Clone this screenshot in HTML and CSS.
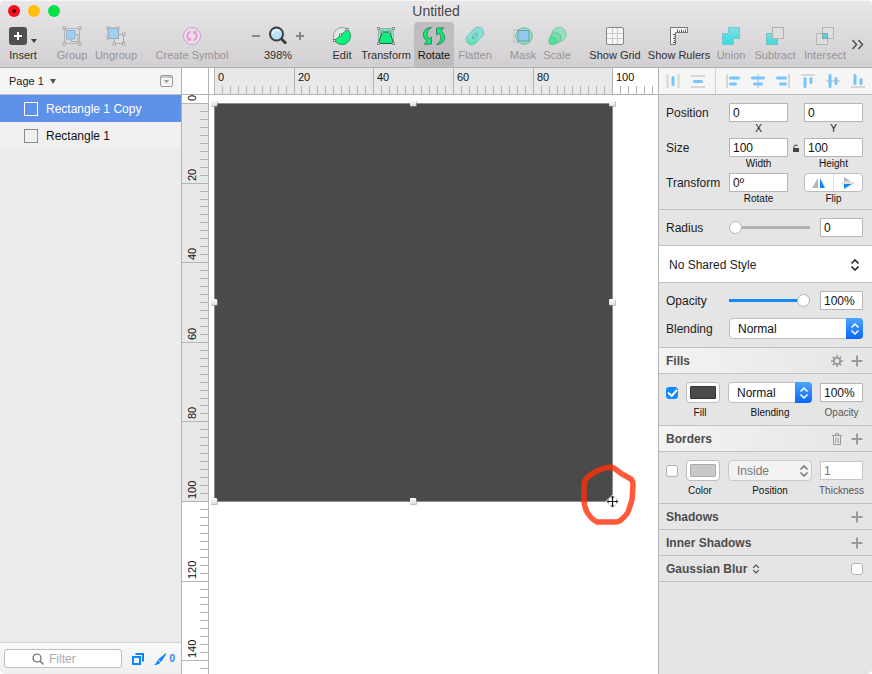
FILE: index.html
```html
<!DOCTYPE html>
<html lang="en">
<head>
<meta charset="utf-8">
<title>Untitled</title>
<link rel="stylesheet" href="styles.css">
</head>
<body>
<svg class="defs" aria-hidden="true">
  <defs>
    <linearGradient id="cyan" x1="0" y1="0" x2="0" y2="1"><stop offset="0" stop-color="#82dfe2"/><stop offset="1" stop-color="#36dcdf"/></linearGradient>
    <linearGradient id="mint" x1="0" y1="0" x2="0" y2="1"><stop offset="0" stop-color="#8fd8dc"/><stop offset=".6" stop-color="#86dfd0"/><stop offset="1" stop-color="#45e59c"/></linearGradient>
    <linearGradient id="teal" x1="0" y1="0" x2="0" y2="1"><stop offset="0" stop-color="#6ce0b8"/><stop offset="1" stop-color="#d5ebe5"/></linearGradient>
    <linearGradient id="grip" x1="0" y1="0" x2="0" y2="1"><stop offset="0" stop-color="#fff"/><stop offset="1" stop-color="#dcdcdc"/></linearGradient>
    <symbol id="plus" viewBox="0 0 12 12"><path d="M6 0.5V11.5M0.500 6H11.500" stroke="#9a9a9a" stroke-width="2"/></symbol>
    <symbol id="updown" viewBox="0 0 10 12"><path d="M1.500 4.500L5 1L8.500 4.500M1.500 7.500L5 11L8.500 7.500" fill="none" stroke="currentColor" stroke-width="1.500"/></symbol>
  </defs>
</svg>
<div class="window">
  <header class="chrome">
    <div class="titlebar">
      <div class="lights">
        <button class="light red" aria-label="Close"></button>
        <button class="light yellow" aria-label="Minimize"></button>
        <button class="light green" aria-label="Zoom"></button>
      </div>
      <h1>Untitled</h1>
      <span></span>
    </div>
    <nav class="toolbar">
      <div class="group">
        <button class="tool w46"><span class="insert"><svg width="18" height="18" viewBox="0 0 18 18"><rect width="18" height="18" rx="3" fill="#505050"/><path d="M9 5V13M5 9H13" stroke="#fff" stroke-width="2"/></svg><svg width="6" height="12" viewBox="0 0 6 12"><path d="M0 5H6L3 9Z" fill="#404040"/></svg></span>Insert</button>
      </div>
      <div class="group gap-s">
        <button class="tool w44" disabled><svg width="20" height="20" viewBox="0 0 20 20"><rect x="2.500" y="2.500" width="15" height="15" fill="none" stroke="#b4b4b4"/><rect x="9" y="8.500" width="7" height="7" fill="#dedede" stroke="#aaa"/><rect x="4.500" y="4.500" width="8.500" height="8.500" fill="#9fd0f1" stroke="#8db4cf"/><g fill="#e6e6e6" stroke="#aaa"><rect x="1" y="1" width="2.500" height="2.500"/><rect x="16.500" y="1" width="2.500" height="2.500"/><rect x="1" y="16.500" width="2.500" height="2.500"/><rect x="16.500" y="16.500" width="2.500" height="2.500"/></g></svg>Group</button>
        <button class="tool w44" disabled><svg width="20" height="20" viewBox="0 0 20 20"><rect x="8.500" y="8.500" width="9" height="9" fill="#dedede" stroke="#aaa"/><rect x="2" y="2" width="10.500" height="10.500" fill="#9fd0f1" stroke="#98aab8"/><g fill="#e6e6e6" stroke="#aaa"><rect x="1" y="1" width="2" height="2"/><rect x="11" y="1" width="2" height="2"/><rect x="1" y="11" width="2" height="2"/><rect x="16.500" y="7" width="2.500" height="2.500"/><rect x="16.500" y="16.500" width="2.500" height="2.500"/><rect x="7" y="16.500" width="2.500" height="2.500"/></g></svg>Ungroup</button>
      </div>
      <div class="group gap-l">
        <button class="tool w80" disabled><svg width="20" height="20" viewBox="0 0 20 20"><circle cx="10" cy="10" r="8.500" fill="#e8e0e7" stroke="#cf9fca"/><path d="M8.500 5.500C4.500 7 4.500 12 7.500 14M11.500 14.500C15.500 13 15.500 8 12.500 6" fill="none" stroke="#f38ee0" stroke-width="1.800"/><path d="M5 14.800H9V11ZM15 5.200H11V9Z" fill="#f38ee0"/></svg>Create Symbol</button>
      </div>
      <div class="group gap-l">
        <div class="tool w64"><span class="zoom"><button aria-label="Zoom out"><svg width="10" height="10" viewBox="0 0 10 10"><path d="M1 5H9" stroke="#858585" stroke-width="2"/></svg></button><svg width="20" height="20" viewBox="0 0 20 20"><path d="M13 12.500L18 17.500" stroke="#3d3d3d" stroke-width="3"/><circle cx="8.500" cy="8" r="6.500" fill="#b9e4f8" stroke="#3d3d3d" stroke-width="2"/><path d="M4.800 7.500A4 4 0 0 1 11.500 5" stroke="#e9f9ff" stroke-width="2" fill="none"/></svg><button aria-label="Zoom in"><svg width="10" height="10" viewBox="0 0 10 10"><path d="M5 1V9M1 5H9" stroke="#858585" stroke-width="2"/></svg></button></span>398%</div>
      </div>
      <div class="group gap-l">
        <button class="tool w36"><svg width="20" height="20" viewBox="0 0 20 20"><circle cx="10" cy="10" r="8.500" fill="#dfe8e6" stroke="#91aaa6"/><path d="M2.800 14.500L8.500 9L15.500 3.500A8.500 8.500 0 1 1 2.800 14.500Z" fill="#0df27c" stroke="#2e9b63"/><g fill="#fff" stroke="#7a5f68" stroke-width=".8"><rect x="1.500" y="13.500" width="2.200" height="2.200"/><rect x="7.400" y="8" width="2.200" height="2.200"/><rect x="14" y="2.300" width="2.200" height="2.200"/></g></svg>Edit</button>
        <button class="tool w52"><svg width="20" height="20" viewBox="0 0 20 20"><rect x="2.500" y="2.500" width="15" height="15" fill="url(#teal)" stroke="#8fb5aa"/><path d="M2.500 17.500L6 6H14L17.500 17.500Z" fill="#12ed7c" stroke="#275e47"/><g fill="#fff" stroke="#837a7c" stroke-width=".8"><rect x="1.400" y="1.400" width="2" height="2"/><rect x="16.600" y="1.400" width="2" height="2"/><rect x="1.400" y="16.600" width="2" height="2"/><rect x="16.600" y="16.600" width="2" height="2"/><rect x="5" y="5" width="2" height="2"/><rect x="13" y="5" width="2" height="2"/></g></svg>Transform</button>
      </div>
      <div class="group gap-xs">
        <button class="tool active w40"><svg width="24" height="20" viewBox="0 0 24 20"><g fill="#0fe97a" stroke="#26835a" stroke-width=".9" stroke-linejoin="round"><path id="arc" d="M9.500 1.500C3.500 1.500 .8 6 1.500 9.500C2 12 3.200 13.600 4.800 15L2.500 18.300L9.500 18L9.300 11L7.200 13C3.800 9.500 4.500 4.500 9.500 1.500Z"/><use href="#arc" transform="rotate(180 12 10)"/></g></svg>Rotate</button>
        <button class="tool w42" disabled><svg width="20" height="20" viewBox="0 0 20 20"><path d="M8.800 3.200A5.700 5.700 0 1 1 16.800 11.200L11.200 16.800A5.700 5.700 0 1 1 3.200 8.800Z" fill="url(#mint)" stroke="#79cdbf"/><path d="M7.500 12.500C7.200 8.500 8.500 7.200 12.500 7.500M7.500 12.500C11.500 12.800 12.800 11.500 12.500 7.500Z" fill="none" stroke="#6fb5b6"/></svg>Flatten</button>
      </div>
      <div class="group gap-m">
        <button class="tool w34" disabled><svg width="20" height="20" viewBox="0 0 20 20"><rect x="1" y="4" width="14" height="12" fill="#e4e4e4" stroke="#bbb"/><circle cx="11" cy="10" r="8.300" fill="#7fe3b8" fill-opacity=".75" stroke="#6cc49c"/><rect x="5" y="4.500" width="11" height="10.500" fill="#92c8ee" stroke="#7997b0"/></svg>Mask</button>
        <button class="tool w34" disabled><svg width="20" height="20" viewBox="0 0 20 20"><circle cx="12" cy="8.500" r="7.300" fill="#94dfbe" stroke="#84cdac"/><circle cx="8.500" cy="12" r="5.500" fill="#72dfac" stroke="#70bd99"/><circle cx="5.500" cy="15" r="3.700" fill="#4be69a" stroke="#5fbd8e"/></svg>Scale</button>
      </div>
      <div class="group gap-m">
        <button class="tool w62"><svg width="20" height="20" viewBox="0 0 20 20"><rect x="1.500" y="1.500" width="17" height="17" rx="1.500" fill="#f6f6f6"/><path d="M7.500 2V18M12.500 2V18M2 7.500H18M2 12.500H18" stroke="#c9c9c9"/><rect x="1.500" y="1.500" width="17" height="17" rx="1.500" fill="none" stroke="#858585"/></svg>Show Grid</button>
        <button class="tool w66"><svg width="20" height="20" viewBox="0 0 20 20"><rect x="1.500" y="1.500" width="17" height="5" fill="#f4f4f4" stroke="#777"/><path d="M1.500 1.500V18.500H6.500V6.500" fill="#f4f4f4" stroke="#777"/><path d="M8.500 3.500V6M10.500 4.500V6M12.500 3.500V6M14.500 4.500V6M16.500 3.500V6M4 8.500H6M5 10.500H6M4 12.500H6M5 14.500H6M4 16.500H6" stroke="#555"/></svg>Show Rulers</button>
      </div>
      <div class="group gap-xs">
        <button class="tool w34" disabled><svg width="20" height="20" viewBox="0 0 20 20"><path d="M7.500 1.500H18.500V12.500H12.500V18.500H1.500V7.500H7.500Z" fill="url(#cyan)" stroke="#77c9cf"/></svg>Union</button>
        <button class="tool w54" disabled><svg width="20" height="20" viewBox="0 0 20 20"><path d="M1.500 7.500H7.500V12.500H12.500V18.500H1.500Z" fill="url(#cyan)" stroke="#70bfc4"/><rect x="7.500" y="1.500" width="11" height="11" fill="#dedede" stroke="#b2b2b2"/></svg>Subtract</button>
        <button class="tool w46" disabled><svg width="20" height="20" viewBox="0 0 20 20"><g fill="#dedede" stroke="#b5b5b5"><rect x="1.500" y="7.500" width="11" height="11"/><rect x="7.500" y="1.500" width="11" height="11"/></g><rect x="7.500" y="7.500" width="5" height="5" fill="#4fd4da" stroke="#84a5a8"/></svg>Intersect</button>
      </div>
      <button class="more" aria-label="More"><svg width="13" height="11" viewBox="0 0 13 11"><path d="M1.500 1L5.500 5.500L1.500 10M7.500 1L11.500 5.500L7.500 10" fill="none" stroke="#555" stroke-width="1.600"/></svg></button>
    </nav>
  </header>

  <main>
    <aside class="layers">
      <div class="pagebar"><button class="page">Page 1 <svg width="6" height="5" viewBox="0 0 6 5"><path d="M0 0H6L3 5Z" fill="#555"/></svg></button>
        <button aria-label="Toggle pages"><svg width="13" height="12" viewBox="0 0 13 12"><rect x=".5" y=".5" width="12" height="11" rx="1.500" fill="none" stroke="#999"/><path d="M1 2H12" stroke="#999"/><path d="M4 5H9L6.500 8.500Z" fill="#999"/></svg></button></div>
      <ul class="list">
        <li class="selected"><i></i>Rectangle 1 Copy</li>
        <li><i></i>Rectangle 1</li>
      </ul>
      <div class="filterbar">
        <label class="search"><svg width="12" height="12" viewBox="0 0 12 12"><circle cx="5" cy="5" r="4" fill="none" stroke="#666" stroke-width="1.200"/><path d="M8 8L11.500 11.500" stroke="#666" stroke-width="1.300"/></svg><input type="text" placeholder="Filter" aria-label="Filter"></label>
        <button aria-label="Filter shapes"><svg width="12" height="12" viewBox="0 0 12 12"><path d="M3.500 1H11V8.500" fill="none" stroke="#0d86ff" stroke-width="2"/><rect x="1" y="4" width="7" height="7" fill="none" stroke="#0d86ff" stroke-width="2"/></svg></button>
        <button class="slices"><svg width="12" height="12" viewBox="0 0 12 12"><path d="M12 0L4 6.500L7 9L12 1.500ZM3.400 7L6.400 9.500C5 11.500 2.500 12 0 12C2 11 2.800 9 3.400 7Z" fill="#0d86ff"/></svg>0</button>
      </div>
    </aside>

    <section class="stage">
      <div class="corner"></div>
      <svg class="ruler-x" id="ruler-x"></svg>
      <svg class="ruler-y" id="ruler-y"></svg>
      <svg class="canvas" id="canvas">
        <rect x="5.500" y="8.500" width="398" height="398" fill="#4a4a4a" stroke="#8c8c8c"/>
        <g id="handles"></g>
        <path d="M401 373C405 371 408 376 413 379L422 384Q424 386 424 390L423 405L420 414Q419 419 413 424Q410 427 407 427H388Q382 424 378 417Q375 411 375 406V389Q376 384 381 380Q388 375 396 373L402 372" fill="none" stroke="#ff2e0a" stroke-opacity=".8" stroke-width="5.500" stroke-linecap="round" stroke-linejoin="round"/>
        <g transform="translate(403.500 406.500)"><path d="M0 -6.500L6.500 0L0 6.500L-6.500 0Z" fill="#fff" stroke="#ddd"/><path d="M0 -5.500V5.500M-5.500 0H5.500" stroke="#111" stroke-width="1.200"/><path d="M-1.800 -3.500L0 -5.500L1.800 -3.500M-1.800 3.500L0 5.500L1.800 3.500M-3.500 -1.800L-5.500 0L-3.500 1.800M3.500 -1.800L5.500 0L3.500 1.800" fill="none" stroke="#333" stroke-width=".8"/></g>
      </svg>
    </section>

    <aside class="inspector">
      <div class="alignbar">
        <button aria-label="Distribute horizontally"><svg width="16" height="16" viewBox="0 0 16 16"><path d="M2.500 1V15M13.500 1V15" stroke="#d6d6d6" stroke-width="2"/><path class="b" d="M8 4.500V11.500"/></svg></button>
        <button aria-label="Distribute vertically"><svg width="16" height="16" viewBox="0 0 16 16"><path d="M1 3H15M1 14H15" stroke="#d6d6d6" stroke-width="2"/><path class="b" d="M4.500 8.500H11.500"/></svg></button>
        <span class="sep"></span>
        <button aria-label="Align left"><svg width="16" height="16" viewBox="0 0 16 16"><path d="M2 1V15" stroke="#d6d6d6" stroke-width="2"/><path class="b" d="M5.500 5H13.500M5.500 11H10.500"/></svg></button>
        <button aria-label="Align center"><svg width="16" height="16" viewBox="0 0 16 16"><path d="M8 1V15" stroke="#d6d6d6" stroke-width="2"/><path class="b" d="M2.500 5H13.500M4.500 11H11.500"/></svg></button>
        <button aria-label="Align right"><svg width="16" height="16" viewBox="0 0 16 16"><path d="M14 1V15" stroke="#d6d6d6" stroke-width="2"/><path class="b" d="M2.500 5H10.500M5.500 11H10.500"/></svg></button>
        <button aria-label="Align top"><svg width="16" height="16" viewBox="0 0 16 16"><path d="M1 2H15" stroke="#d6d6d6" stroke-width="2"/><path class="b" d="M5 5.500V13.500M11 5.500V9.500"/></svg></button>
        <button aria-label="Align middle"><svg width="16" height="16" viewBox="0 0 16 16"><path d="M1 8H15" stroke="#d6d6d6" stroke-width="2"/><path class="b" d="M5 2.500V13.500M11 5.500V10.500"/></svg></button>
        <button aria-label="Align bottom"><svg width="16" height="16" viewBox="0 0 16 16"><path d="M1 14H15" stroke="#d6d6d6" stroke-width="2"/><path class="b" d="M5 2.500V10.500M11 6.500V10.500"/></svg></button>
      </div>

      <section class="block geometry">
        <span>Position</span>
        <input id="x" type="text" value="0"><i></i><input id="y" type="text" value="0">
        <label class="cap c2" for="x">X</label><label class="cap c4" for="y">Y</label>
        <span>Size</span>
        <input id="w" type="text" value="100"><svg class="lock" width="8" height="8" viewBox="0 0 8 8"><rect x="1" y="4" width="6" height="4" fill="#444"/><path d="M2 4V2.500Q2 1 4 1Q5.500 1 5.500 2" fill="none" stroke="#444"/></svg><input id="h" type="text" value="100">
        <label class="cap c2" for="w">Width</label><label class="cap c4" for="h">Height</label>
        <span>Transform</span>
        <input id="r" type="text" value="0º"><i></i>
        <div class="flip"><button aria-label="Flip horizontal"><svg width="14" height="12" viewBox="0 0 14 12"><path d="M6 1V11H0Z" fill="#b5b5b5"/><path d="M8 1V11H13Z" fill="#0d8bff"/></svg></button><button aria-label="Flip vertical"><svg width="14" height="12" viewBox="0 0 14 12"><path d="M3 0L10 4.500H3Z" fill="#b5b5b5"/><path d="M1 6H13" stroke="#bbb"/><path d="M3 7H11L3 12Z" fill="#0d8bff"/></svg></button></div>
        <label class="cap c2" for="r">Rotate</label><span class="cap c4">Flip</span>
      </section>

      <section class="block slide">
        <label for="rad">Radius</label><input class="range" id="rad" type="range" value="0"><input type="text" value="0" aria-label="Radius value">
      </section>

      <button class="shared">No Shared Style<svg width="10" height="12"><use href="#updown"/></svg></button>

      <section class="block slide">
        <label for="op">Opacity</label><input class="range full" id="op" type="range" value="100"><input type="text" value="100%" aria-label="Opacity value">
        <label for="bl">Blending</label><span class="select wide"><select id="bl"><option>Normal</option></select><span class="knob"><svg width="10" height="12"><use href="#updown"/></svg></span></span>
      </section>

      <h2>Fills<span><svg width="12" height="12" viewBox="0 0 12 12"><circle cx="6" cy="6" r="3.200" fill="none" stroke="#999" stroke-width="1.800"/><path d="M6 0V2.500M6 9.500V12M0 6H2.500M9.500 6H12M1.800 1.800L3.500 3.500M8.500 8.500L10.200 10.200M10.200 1.800L8.500 3.500M3.500 8.500L1.800 10.200" stroke="#999" stroke-width="1.600"/></svg><button aria-label="Add fill"><svg width="12" height="12"><use href="#plus"/></svg></button></span></h2>
      <section class="block paint">
        <input type="checkbox" checked aria-label="Fill enabled">
        <button class="well dark" aria-label="Fill color"><i></i></button>
        <span class="select"><select id="fb"><option>Normal</option></select><span class="knob"><svg width="10" height="12"><use href="#updown"/></svg></span></span>
        <input id="fo" type="text" value="100%">
        <span class="cap pair">Fill</span><label class="cap" for="fb">Blending</label><label class="cap dim" for="fo">Opacity</label>
      </section>

      <h2>Borders<span><svg width="12" height="12" viewBox="0 0 12 12"><path d="M1 2.500H11M4.500 2V.5H7.500V2M2.500 3V11.500H9.500V3M4.800 4.500V10M7.200 4.500V10" fill="none" stroke="#999"/></svg><button aria-label="Add border"><svg width="12" height="12"><use href="#plus"/></svg></button></span></h2>
      <section class="block paint">
        <input type="checkbox" aria-label="Border enabled">
        <button class="well" aria-label="Border color"><i></i></button>
        <span class="select off"><select id="bp" disabled><option>Inside</option></select><span class="knob"><svg width="10" height="12"><use href="#updown"/></svg></span></span>
        <input id="bt" type="text" value="1" disabled>
        <span class="cap pair">Color</span><label class="cap" for="bp">Position</label><label class="cap dim" for="bt">Thickness</label>
      </section>

      <h2 class="plain">Shadows<button aria-label="Add shadow"><svg width="12" height="12"><use href="#plus"/></svg></button></h2>
      <h2 class="plain">Inner Shadows<button aria-label="Add inner shadow"><svg width="12" height="12"><use href="#plus"/></svg></button></h2>
      <h2 class="plain"><label for="gb">Gaussian Blur <svg width="8" height="10"><use href="#updown"/></svg></label><input id="gb" type="checkbox"></h2>
    </aside>
  </main>
</div>
<script src="script.js"></script>
</body>
</html>
```
FILE: styles.css
```css
* { box-sizing: border-box; }
body { margin: 0; background: #fff; font: 12px/14px "Liberation Sans", Arial, sans-serif; color: #1c1c1c; }
button { border: 0; padding: 0; background: none; font: inherit; color: inherit; }
svg { display: block; flex: none; }
h1, h2, ul { margin: 0; padding: 0; }
.defs { position: absolute; width: 0; height: 0; }
.window { height: 100vh; display: flex; flex-direction: column; overflow: hidden; border-radius: 5px; }

.chrome { height: 68px; flex: none; background: linear-gradient(#e9e7e9, #d1cfd1); box-shadow: inset 0 1px #f6f6f6; border-bottom: 1px solid #b1b1b1; }
.titlebar { height: 22px; display: grid; grid-template-columns: 1fr auto 1fr; align-items: center; padding: 0 8px; }
.titlebar h1 { font-size: 14px; line-height: 20px; font-weight: 400; color: #474747; }
.lights { display: flex; gap: 8px; }
.light { width: 12px; height: 12px; border-radius: 50%; }
.red { background: radial-gradient(circle, #5c0000 0 2px, #fc0d1b 2px); }
.yellow { background: #febe0a; }
.green { background: #06df4a; }

.toolbar { display: flex; height: 45px; font-size: 11px; }
.group { display: flex; }
.gap-xs { margin-left: 2px; }
.gap-s { margin-left: 4px; }
.gap-m { margin-left: 10px; }
.gap-l { margin-left: 14px; }
.tool { display: flex; flex-direction: column; align-items: center; gap: 2px; padding-top: 4px; white-space: nowrap; color: #303030; flex: none; }
.tool:disabled { color: #979597; }
.active { background: #bfbdbf; border-radius: 4px 4px 0 0; color: #111; }
.w34 { width: 34px; } .w36 { width: 36px; } .w40 { width: 40px; } .w42 { width: 42px; }
.w44 { width: 44px; } .w46 { width: 46px; } .w52 { width: 52px; } .w54 { width: 54px; }
.w62 { width: 62px; } .w64 { width: 64px; } .w66 { width: 66px; } .w80 { width: 80px; }
.insert { display: flex; align-items: center; gap: 4px; height: 20px; }
.insert svg:last-child { align-self: flex-end; }
.zoom { display: flex; align-items: center; gap: 7px; }
.more { margin: 0 8px 0 auto; }

main { flex: 1; min-height: 0; display: grid; grid-template-columns: 182px minmax(0, 1fr) 214px; }

.layers { display: flex; flex-direction: column; background: #ebebeb; border-right: 1px solid #b4b4b4; }
.pagebar { height: 27px; display: flex; align-items: center; justify-content: space-between; padding: 0 8px 0 9px; background: #f5f5f5; border-bottom: 1px solid #c0c0c0; font-size: 11px; }
.page { display: flex; align-items: center; gap: 6px; }
.list { flex: 1; list-style: none; }
.list li { display: flex; align-items: center; gap: 8px; height: 27px; padding-left: 24px; background: #f0f0f0; color: #111; }
.list i { width: 14px; height: 14px; border: 1px solid #8d8d8d; }
.list .selected { background: #5e91ea; color: #fff; }
.list .selected i { border-color: #fff; }
.filterbar { height: 32px; display: flex; align-items: center; justify-content: space-between; padding: 0 6px 0 4px; border-top: 1px solid #d3d3d3; background: linear-gradient(#f9f9f9, #efefef); }
.search { display: flex; align-items: center; gap: 5px; width: 118px; height: 19px; padding-left: 27px; background: #fff; border: 1px solid #bebebe; border-radius: 3px; }
.search input { width: 70px; border: 0; padding: 0; background: none; height: 16px; }
.search input::placeholder { color: #aaa; }
.slices { display: flex; align-items: center; gap: 3px; font-size: 10px; font-weight: 700; color: #2d7cff; }

.stage { display: grid; grid-template: 27px minmax(0, 1fr) / 27px minmax(0, 1fr); background: #fff; }
.corner, .ruler-y { border-right: 1px solid #b4b4b4; }
.corner, .ruler-x { border-bottom: 1px solid #b4b4b4; }
.stage svg { width: 100%; height: 100%; overflow: hidden; }
.stage text { font-size: 11px; fill: #111; }

.inspector { background: #e5e5e5; border-left: 1px solid #b4b4b4; overflow: hidden; }
.alignbar { height: 27px; display: flex; padding-left: 1px; background: #f5f5f5; border-bottom: 1px solid #b9b9b9; }
.alignbar button { flex: 0 0 25px; display: flex; align-items: center; justify-content: center; }
.sep { width: 1px; margin: 0 4px 0 5px; background: #d0d0d0; }
.b { stroke: #73c6fb; stroke-width: 3; stroke-linecap: round; }
.block { padding: 8px 9px 8px 7px; border-bottom: 1px solid #c2c2c2; align-items: center; }
.geometry { display: grid; grid-template-columns: 63px 1fr 16px 1fr; padding-bottom: 1px; }
.lock { justify-self: center; }
.cap { font-size: 10px; line-height: 14px; text-align: center; justify-self: center; color: #111; white-space: nowrap; }
.geometry .cap { margin-bottom: 2px; }
.c2 { grid-column: 2; }
.c4 { grid-column: 4; }
.dim { color: #555; }
input[type=text] { min-width: 0; font: inherit; color: #111; }
.block input[type=text] { width: 100%; height: 19px; padding: 0 3px; border: 1px solid #b5b5b5; background: #fff; }
.block input[type=text]:disabled { color: #777; border-color: #c6c6c6; }
.flip { display: flex; height: 19px; background: #fff; border: 1px solid #bdbdbd; border-radius: 4px; }
.flip button { flex: 1; display: flex; align-items: center; justify-content: center; }
.flip button + button { border-left: 1px solid #ddd; }

.slide { display: grid; grid-template-columns: 63px 1fr 43px; row-gap: 8px; }
.range { appearance: none; margin: 0 10px 0 0; height: 13px; min-width: 0; background: linear-gradient(#b2b2b2, #b2b2b2) center / 100% 3px no-repeat; }
.full { background-image: linear-gradient(#0d8bff, #0d8bff); }
.range::-webkit-slider-thumb { appearance: none; width: 13px; height: 13px; border-radius: 50%; background: #fff; border: 1px solid #b5b5b5; }
.wide { grid-column: 2 / 4; }
.shared { display: flex; width: 100%; height: 37px; align-items: center; justify-content: space-between; padding: 1px 12px 0 10px; background: #fff; border-bottom: 1px solid #c2c2c2; }

.select { position: relative; height: 21px; }
.select select { appearance: none; width: 100%; height: 21px; padding: 0 24px 0 8px; border: 1px solid #bdbdbd; border-radius: 4px; background: #fff; font: inherit; color: #111; }
.knob { position: absolute; top: 0; right: 0; width: 17px; height: 21px; display: flex; align-items: center; justify-content: center; border-radius: 0 4px 4px 0; background: linear-gradient(#4da5fc, #0a66fb); color: #fff; pointer-events: none; }
.off select { background: #f2f2f2; color: #777; opacity: 1; border-color: #c9c9c9; }
.off .knob { background: none; color: #777; }

h2 { height: 26px; display: flex; align-items: center; justify-content: space-between; padding: 0 9px 0 7px; font-size: 12px; line-height: 14px; color: #4c4c4c; background: linear-gradient(90deg, #f3f3f3, #e5e5e5); border-bottom: 1px solid #c2c2c2; }
h2.plain { background: none; }
h2 span, h2 label { display: flex; align-items: center; gap: 8px; }
h2 label { gap: 5px; }
.paint { display: grid; grid-template-columns: 12px 34px 1fr 43px; gap: 3px 8px; padding-bottom: 5px; }
.pair { grid-column: 1 / 3; justify-self: end; width: 40px; }
.well { height: 21px; padding: 3px; background: #fff; border: 1px solid #bcbcbc; border-radius: 4px; }
.well i { display: block; height: 13px; background: #c8c8c8; border: 1px solid #aaa; border-radius: 1px; }
.dark i { background: #4a4a4a; border-color: #333; }
input[type=checkbox] { appearance: none; width: 12px; height: 12px; margin: 0; background: #fff; border: 1px solid #b3b3b3; border-radius: 3px; display: grid; place-items: center; }
input[type=checkbox]:checked { background: #0d8bff; border-color: #0d8bff; }
input[type=checkbox]:checked::before { content: ""; width: 7px; height: 4px; border: solid #fff; border-width: 0 0 2px 2px; transform: translateY(-1px) rotate(-48deg); }
```
FILE: script.js
```
const NS = "http://www.w3.org/2000/svg";

function add(parent, tag, attrs, text) {
  const node = document.createElementNS(NS, tag);
  for (const key in attrs) node.setAttribute(key, attrs[key]);
  if (text !== undefined) node.textContent = text;
  parent.appendChild(node);
}

// Horizontal ruler: the shaded part spans the selected layer.
function drawRulerX() {
  const rx = document.getElementById("ruler-x");
  const width = rx.getBoundingClientRect().width;
  rx.replaceChildren();
  add(rx, "rect", { x: 5, y: 0, width: 398, height: 27, fill: "#e8e8e8" });
  for (let v = 0; 5 + v * 3.985 < width; v += 2) {
    const x = Math.floor(5.3 + v * 3.985);
    const major = v % 20 === 0;
    add(rx, "rect", { x, y: major ? 0 : 18, width: 1, height: 27, fill: "#b4b4b4" });
    if (major && x + 25 < width) add(rx, "text", { x: x + 4, y: 13 }, v);
  }
}

function drawRulerY() {
  const ry = document.getElementById("ruler-y");
  const height = ry.getBoundingClientRect().height;
  ry.replaceChildren();
  add(ry, "rect", { x: 0, y: 8, width: 27, height: 398, fill: "#e8e8e8" });
  for (let v = 0; 8 + v * 3.98 < height; v += 2) {
    const y = Math.floor(8.5 + v * 3.98);
    const major = v % 20 === 0;
    add(ry, "rect", { x: major ? 0 : 18, y, width: 27, height: 1, fill: "#b4b4b4" });
    if (major) add(ry, "text", { transform: `translate(14 ${y - 2}) rotate(-90)` }, v);
  }
}

function drawRulers() {
  drawRulerX();
  drawRulerY();
}
drawRulers();
window.addEventListener("resize", drawRulers);

// Resize handles; the cursor covers the last corner.
const handles = document.getElementById("handles");
for (const [x, y] of [[5, 8], [204, 8], [403, 8], [5, 207], [403, 207], [5, 406], [204, 406]]) {
  add(handles, "rect", { x: x - 3, y: y - 2, width: 7, height: 6, rx: 1, fill: "#999", "fill-opacity": 0.6 });
  add(handles, "rect", { x: x - 3, y: y - 3, width: 6, height: 6, rx: 1, fill: "url(#grip)" });
}
```
